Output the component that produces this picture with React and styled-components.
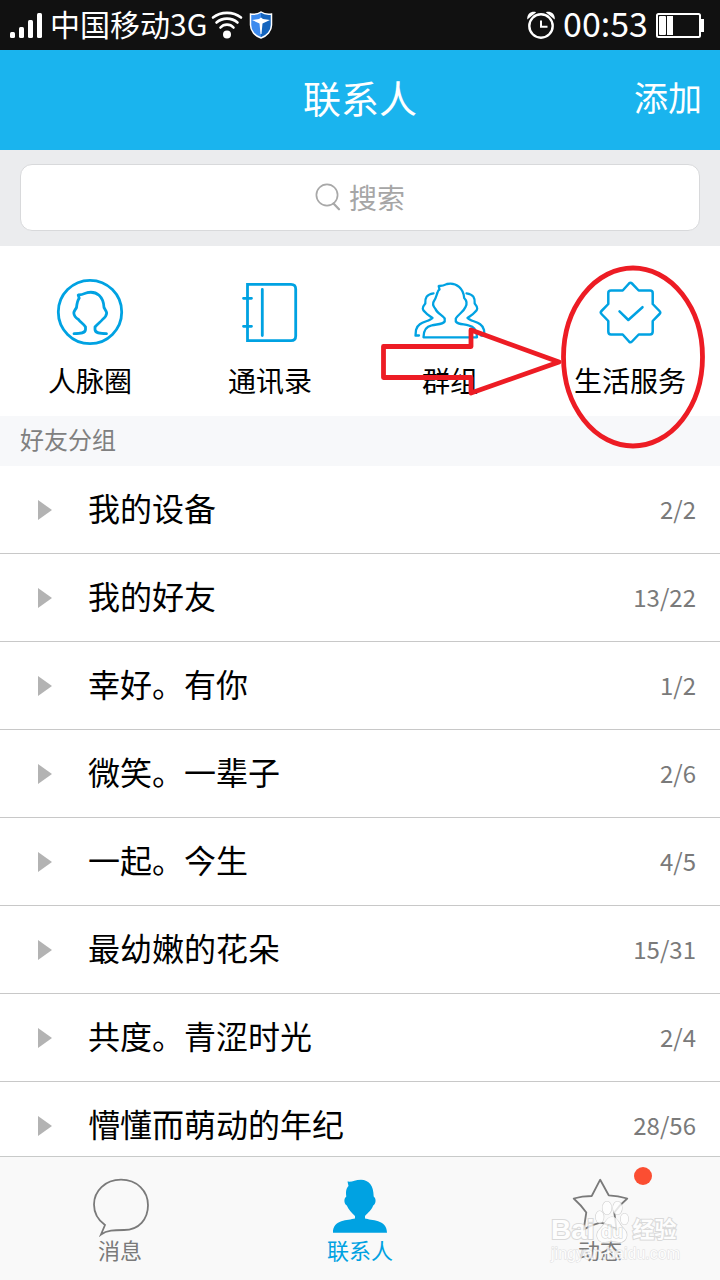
import React from "react";
import styled, { createGlobalStyle } from "styled-components";

const BLUE = "#00a2e2";
const GREY = "#7a7a7a";

const GlobalStyle = createGlobalStyle`
  *, *::before, *::after { box-sizing: border-box; }
  body {
    margin: 0;
    font-family: "Noto Sans CJK SC", "Liberation Sans", sans-serif;
    color: #000;
    background: #fff;
  }
  button, input { font: inherit; color: inherit; }
  button { border: 0; padding: 0; background: none; cursor: pointer; }
  svg { display: block; flex: none; }
`;

const Screen = styled.div`
  display: flex;
  flex-direction: column;
  height: 100vh;
  overflow: hidden;
`;

const StatusBar = styled.div`
  flex: none;
  display: flex;
  align-items: center;
  justify-content: space-between;
  height: 50px;
  padding: 0 16px 0 10px;
  background: #111;
  color: #fff;
`;

const StatusGroup = styled.div`
  display: flex;
  align-items: center;
  gap: ${(p) => p.$gap}px;
`;

const StatusText = styled.span`
  padding-bottom: 4px;
  font-size: ${(p) => p.$size}px;
  line-height: 46px;
`;

const Header = styled.header`
  flex: none;
  display: grid;
  grid-template-columns: 1fr auto 1fr;
  align-items: center;
  height: 100px;
  padding: 0 18px 6px;
  background: #1ab4ee;
  color: #fff;
`;

const Title = styled.h1`
  grid-column: 2;
  margin: 0;
  font-size: 38px;
  font-weight: 400;
  line-height: 48px;
`;

const AddButton = styled.button`
  justify-self: end;
  font-size: 34px;
  line-height: 48px;
`;

const SearchArea = styled.div`
  flex: none;
  padding: 14px 20px 15px;
  background: #ebecee;
`;

const SearchBox = styled.label`
  display: flex;
  align-items: center;
  justify-content: center;
  gap: 8px;
  height: 67px;
  padding-bottom: 2px;
  border: 1px solid #d8d9db;
  border-radius: 12px;
  background: #fff;
`;

const SearchInput = styled.input`
  field-sizing: content;
  min-width: 56px;
  padding: 0;
  border: 0;
  outline: 0;
  background: none;
  font-size: 28px;
  line-height: 40px;
  &::placeholder { color: #a6a6a6; opacity: 1; }
`;

const Shortcuts = styled.nav`
  position: relative;
  flex: none;
  display: flex;
  height: 170px;
`;

const Shortcut = styled.button`
  flex: 1;
  display: flex;
  flex-direction: column;
  align-items: center;
  gap: 18px;
  padding-top: 32px;
  font-size: 28px;
  line-height: 32px;
`;

const Annotation = styled.svg`
  position: absolute;
  top: 0;
  right: 0;
  z-index: 1;
  pointer-events: none;
`;

const SectionTitle = styled.h2`
  flex: none;
  margin: 0;
  padding: 0 20px 4px;
  background: #f7f8fa;
  color: #808080;
  font-size: 24px;
  font-weight: 400;
  line-height: 46px;
`;

const GroupList = styled.ul`
  flex: 1;
  min-height: 0;
  margin: 0;
  padding: 0;
  list-style: none;
  overflow-y: auto;
  scrollbar-width: none;
`;

const GroupRow = styled.button`
  display: flex;
  align-items: center;
  width: 100%;
  height: 88px;
  padding: 0 24px 0 38px;
  border-bottom: 1px solid #c8c8c8;
  text-align: left;
`;

const GroupName = styled.span`
  flex: 1;
  padding: 0 0 6px 36px;
  font-size: 32px;
  line-height: 40px;
`;

const GroupCount = styled.span`
  padding-bottom: 2px;
  color: ${GREY};
  font-size: 24px;
  line-height: 40px;
`;

const TabBar = styled.nav`
  position: relative;
  flex: none;
  display: flex;
  height: 124px;
  border-top: 1px solid #c8cac9;
  background: #f9f9f9;
`;

const Tab = styled.button`
  flex: 1;
  display: flex;
  flex-direction: column;
  align-items: center;
  padding-top: 21px;
  color: ${(p) => (p.$active ? BLUE : GREY)};
  font-size: 22px;
  line-height: 22px;
`;

const TabIcon = styled.span`
  position: relative;
  display: block;
`;

const Badge = styled.span`
  position: absolute;
  top: -11px;
  left: 64px;
  width: 18px;
  height: 18px;
  border-radius: 50%;
  background: #fb4e32;
`;

const Watermark = styled.div`
  position: absolute;
  right: 40px;
  bottom: 16px;
  display: flex;
  flex-direction: column;
  pointer-events: none;
  color: #fff;
  opacity: 0.8;
  font-family: "Liberation Sans", "Noto Sans CJK SC", sans-serif;
  -webkit-text-stroke: 2px #d2d2d2;
  paint-order: stroke fill;
`;

const WatermarkBrand = styled.div`
  display: flex;
  align-items: flex-end;
  font-size: 28px;
  font-weight: 700;
  line-height: 28px;
`;

const WatermarkCn = styled.span`
  padding-left: 4px;
  font-size: 22px;
`;

const WatermarkUrl = styled.div`
  font-size: 16px;
  line-height: 20px;
  -webkit-text-stroke: 1px #d8d8d8;
`;

const SignalIcon = () => (
  <svg width="36" height="26" viewBox="0 0 36 26" fill="#fff" aria-hidden="true">
    <rect x="0" y="20" width="5" height="6" rx="1.5" />
    <rect x="9" y="15" width="5" height="11" rx="1.5" />
    <rect x="18" y="8" width="5" height="18" rx="1.5" />
    <rect x="27" y="1" width="5" height="25" rx="1.5" />
  </svg>
);

const WifiIcon = () => (
  <svg width="32" height="28" viewBox="0 0 32 28" fill="none" stroke="#fff" strokeWidth="2.6" strokeLinecap="round" aria-hidden="true">
    <path d="M2 6.5C10 .3 22 .3 30 6.5" />
    <path d="M5.5 11.5C11.5 6.3 20.5 6.3 26.5 11.5" />
    <path d="M9.5 16.5C13 12.6 19 12.6 22.5 16.5" />
    <circle cx="16" cy="23.5" r="4" fill="#fff" stroke="none" />
  </svg>
);

const ShieldIcon = () => (
  <svg width="26" height="28" viewBox="0 0 26 28" aria-hidden="true">
    <path d="M14 1C17 3 21 3.5 24.5 3V14C24.5 20 20 25 14 27C8 25 3.5 20 3.5 14V3C7 3.5 11 3 14 1Z" fill="#3d8bee" />
    <path d="M14 1C17 3 21 3.5 24.5 3V14C24.5 20 20 25 14 27Z" fill="#1464bd" />
    <path d="M14 1C17 3 21 3.5 24.5 3V14C24.5 20 20 25 14 27C8 25 3.5 20 3.5 14V3C7 3.5 11 3 14 1Z" fill="none" stroke="#fff" strokeWidth="1.5" />
    <path d="M5 9L12 8L14 6.5L16 8L23 9L15.5 12.5L14.5 23H13.5L12.5 12.5Z" fill="#fff" />
  </svg>
);

const AlarmIcon = () => (
  <svg width="28" height="28" viewBox="0 0 28 28" fill="none" stroke="#fff" strokeWidth="2.4" aria-hidden="true">
    <circle cx="14" cy="15" r="11.7" />
    <path d="M14 9.5V15.8H20.5" strokeWidth="2" />
    <path d="M.3 8.5C-.5 3 4.5-.5 9.2 1.2Z" fill="#fff" stroke="none" />
    <path d="M27.7 8.5C28.5 3 23.500-.5 18.8 1.2Z" fill="#fff" stroke="none" />
  </svg>
);

const BatteryIcon = () => (
  <svg width="48" height="25" viewBox="0 0 48 25" aria-hidden="true">
    <rect x="1" y="1" width="43" height="23" rx="1.5" fill="none" stroke="#fff" strokeWidth="2" />
    <rect x="45" y="6" width="3" height="13" fill="#fff" />
    <rect x="3" y="3" width="7" height="19" rx="1" fill="#fff" />
    <rect x="11" y="3" width="6" height="19" fill="#fff" />
  </svg>
);

const SearchIcon = () => (
  <svg width="26" height="28" viewBox="0 0 26 28" fill="none" stroke="#a8a8a8" strokeWidth="1.7" strokeLinecap="round" aria-hidden="true">
    <circle cx="12" cy="12" r="10.6" />
    <path d="M18.5 20.5L24 26.3" strokeWidth="2.2" />
  </svg>
);

const LineIcon = ({ children, weight = 2.8 }) => (
  <svg width="72" height="68" viewBox="0 0 72 68" fill="none" stroke={BLUE} strokeWidth={weight} strokeLinecap="round" strokeLinejoin="round" aria-hidden="true">
    {children}
  </svg>
);

const CircleIcon = () => (
  <LineIcon>
    <circle cx="36" cy="34" r="31.7" />
    <path d="M20 55.7C27 55.5 31.500 55 31.5 51.500V49C30 46 26 44 24.500 41.500C22 40 20 37.500 19.800 35C19.800 33 21.500 31.500 22.500 29.500C23 25 23.500 22.500 25.200 20.200L24.200 17C28 17 31 15.5 33 14.7C43 12.5 49.500 19 50 29.500C51 31.500 52.500 33 52.700 35C52.500 37.500 50.500 40 48.500 41.500C46.500 44 43.500 46 41 49V51.500C41 55 45.500 55.500 52.5 55.7" />
  </LineIcon>
);

const BookIcon = () => (
  <LineIcon>
    <path d="M13.5 6.3H57Q61.7 6.3 61.7 11V58Q61.7 62.7 57 62.7H13.5Z" strokeLinejoin="miter" />
    <path d="M28.3 11.5V57.5M9.5 20.3H17.5M9.5 48.3H17.5" />
  </LineIcon>
);

const PeopleIcon = () => (
  <LineIcon weight={2.3}>
    <path d="M9.5 59.3C9.5 54 11 48.5 17.7 47.3C23 46 28.500 46.8 30.700 43.500V40.5C28 37 23 35 21.500 31C19 28 18.500 25 20 23C22 20.500 22.500 17 23.500 14.500C24 13 24.500 12 25.5 11.5L24.7 8C28 8.2 31 7 33 6C43 4 49.500 11 50.2 20C53 23 53.200 26 51.500 29C49.500 34 44.500 36 41.8 40.5V43.500C44 46.800 50 46 54.5 47.3C61.5 48.5 63 54 63 59.3Z" />
    <path d="M19.5 15.3C12.5 16.5 11 19.5 11.3 25.5C7.5 30 8.5 32 11 34C13.500 37 16 38 18.5 40C15 44 3.5 43.5 2 52L1.5 57.5H5" />
    <path d="M52.5 15.3C59.5 16.5 61 19.5 60.7 25.5C64.500 30 63.5 32 61 34C58.500 37 56 38 53.5 40C57 44 68.5 43.5 70 52L70.5 57.5H67" />
  </LineIcon>
);

const ServiceIcon = () => (
  <LineIcon weight={2.5}>
    <path d="M28.7 12.5L35 5.5Q36.5 4 38 5.5L44.7 12.5H56Q58.7 12.5 58.7 15V26L65.5 33Q67 34.5 65.5 36L58.7 43V53.5Q58.7 56.5 56 56.5H44.7L38 63.5Q36.5 65 35 63.5L28.7 56.5H17Q14.3 56.5 14.3 53.5V43L7.5 36Q6 34.5 7.5 33L14.3 26V15Q14.3 12.5 17 12.5Z" />
    <path d="M25.5 33.3L34.3 42L48.5 29.2" />
  </LineIcon>
);

const ArrowIcon = () => (
  <svg width="14" height="20" viewBox="0 0 14 20" fill="#b3b3b3" aria-hidden="true">
    <path d="M0 0L14 10L0 20Z" />
  </svg>
);

const MessageIcon = () => (
  <svg width="60" height="60" viewBox="0 0 60 60" fill="none" stroke={GREY} strokeWidth="1.8" aria-hidden="true">
    <path d="M15 47L11 56.5C17 52 24 52 34 52C49 52 58 41 58 27.3C58 13 47 1.7 31 1.7C15 1.7 4 13 4 26.5C4 35 8 42 15 47Z" />
  </svg>
);

const PersonIcon = () => (
  <svg width="60" height="60" viewBox="0 0 60 60" fill={BLUE} aria-hidden="true">
    <path d="M17.500 3.500C22 4.300 25 1.700 31 1.700C39 2 43.500 7 43.700 18.500C46.500 20.500 46 26 43.200 27.500C41 33 38 34.500 35 38V40.500C41 42.500 57 41 57 54.700H3C3 41 18 42.500 25 40.500V38C22 35 18.500 32 16.800 27.500C14 26 13.500 20.500 16.300 18.500C15.500 13 16.500 10 18.500 8Z" />
  </svg>
);

const StarIcon = () => (
  <svg width="60" height="60" viewBox="0 0 60 60" fill="none" stroke={GREY} strokeWidth="1.8" strokeLinejoin="round" aria-hidden="true">
    <path d="M30.2 1.7L38.7 17.3Q48 17.5 57.3 20.5Q49.5 27 44.3 34.5Q45.5 43 46.5 51.5Q39 46.5 30.2 44.7Q21 47 13.7 51.5L16.3 34.5Q11 27 3.7 20.5Q12 18 21.7 18Z" />
  </svg>
);

const PawIcon = () => (
  <svg width="34" height="44" viewBox="0 0 34 44" fill="#fff" stroke="#c8c8c8" strokeWidth="1.2" aria-hidden="true">
    <ellipse cx="12" cy="8" rx="4.5" ry="6.5" />
    <ellipse cx="22.5" cy="8" rx="4.5" ry="6.5" />
    <ellipse cx="4.7" cy="17" rx="4" ry="6" />
    <ellipse cx="29.5" cy="19" rx="3.8" ry="5.5" />
    <path d="M17 17C23 17 24 25 29 29C35 35 30 43 24 42C19 41 15 41 10 42C3 43-1 35 5 29C10 25 11 17 17 17Z" />
    <text x="17" y="38" textAnchor="middle" fontSize="18" fontWeight="700">du</text>
  </svg>
);

const shortcuts = [
  { label: "人脉圈", Icon: CircleIcon },
  { label: "通讯录", Icon: BookIcon },
  { label: "群组", Icon: PeopleIcon },
  { label: "生活服务", Icon: ServiceIcon },
];

const groups = [
  ["我的设备", "2/2"],
  ["我的好友", "13/22"],
  ["幸好。有你", "1/2"],
  ["微笑。一辈子", "2/6"],
  ["一起。今生", "4/5"],
  ["最幼嫩的花朵", "15/31"],
  ["共度。青涩时光", "2/4"],
  ["懵懂而萌动的年纪", "28/56"],
];

const tabs = [
  { label: "消息", Icon: MessageIcon },
  { label: "联系人", Icon: PersonIcon, active: true },
  { label: "动态", Icon: StarIcon, badge: true },
];

export default function App() {
  return (
    <Screen>
      <GlobalStyle />
      <StatusBar>
        <StatusGroup $gap={4}>
          <SignalIcon />
          <StatusText $size={30}>中国移动3G</StatusText>
          <WifiIcon />
          <ShieldIcon />
        </StatusGroup>
        <StatusGroup $gap={8}>
          <AlarmIcon />
          <StatusText $size={34}>00:53</StatusText>
          <BatteryIcon />
        </StatusGroup>
      </StatusBar>

      <Header>
        <Title>联系人</Title>
        <AddButton type="button">添加</AddButton>
      </Header>

      <SearchArea>
        <SearchBox>
          <SearchIcon />
          <SearchInput type="text" placeholder="搜索" aria-label="搜索" />
        </SearchBox>
      </SearchArea>

      <Shortcuts>
        {shortcuts.map(({ label, Icon }) => (
          <Shortcut key={label} type="button">
            <Icon />
            {label}
          </Shortcut>
        ))}
        <Annotation width="350" height="210" viewBox="0 0 350 210" fill="none" stroke="#ed1c24" strokeWidth="4.8" aria-hidden="true">
          <path d="M13.5 100.5H101V84L189 116L101 147V131.5H13.5Z" strokeLinejoin="round" />
          <ellipse cx="263" cy="111" rx="69.5" ry="89" />
        </Annotation>
      </Shortcuts>

      <SectionTitle>好友分组</SectionTitle>
      <GroupList>
        {groups.map(([name, count]) => (
          <li key={name}>
            <GroupRow type="button">
              <ArrowIcon />
              <GroupName>{name}</GroupName>
              <GroupCount>{count}</GroupCount>
            </GroupRow>
          </li>
        ))}
      </GroupList>

      <TabBar>
        {tabs.map(({ label, Icon, active, badge }) => (
          <Tab key={label} type="button" $active={active}>
            <TabIcon>
              <Icon />
              {badge && <Badge />}
            </TabIcon>
            {label}
          </Tab>
        ))}
        <Watermark>
          <WatermarkBrand>
            Bai
            <PawIcon />
            <WatermarkCn>经验</WatermarkCn>
          </WatermarkBrand>
          <WatermarkUrl>jingyan.baidu.com</WatermarkUrl>
        </Watermark>
      </TabBar>
    </Screen>
  );
}
